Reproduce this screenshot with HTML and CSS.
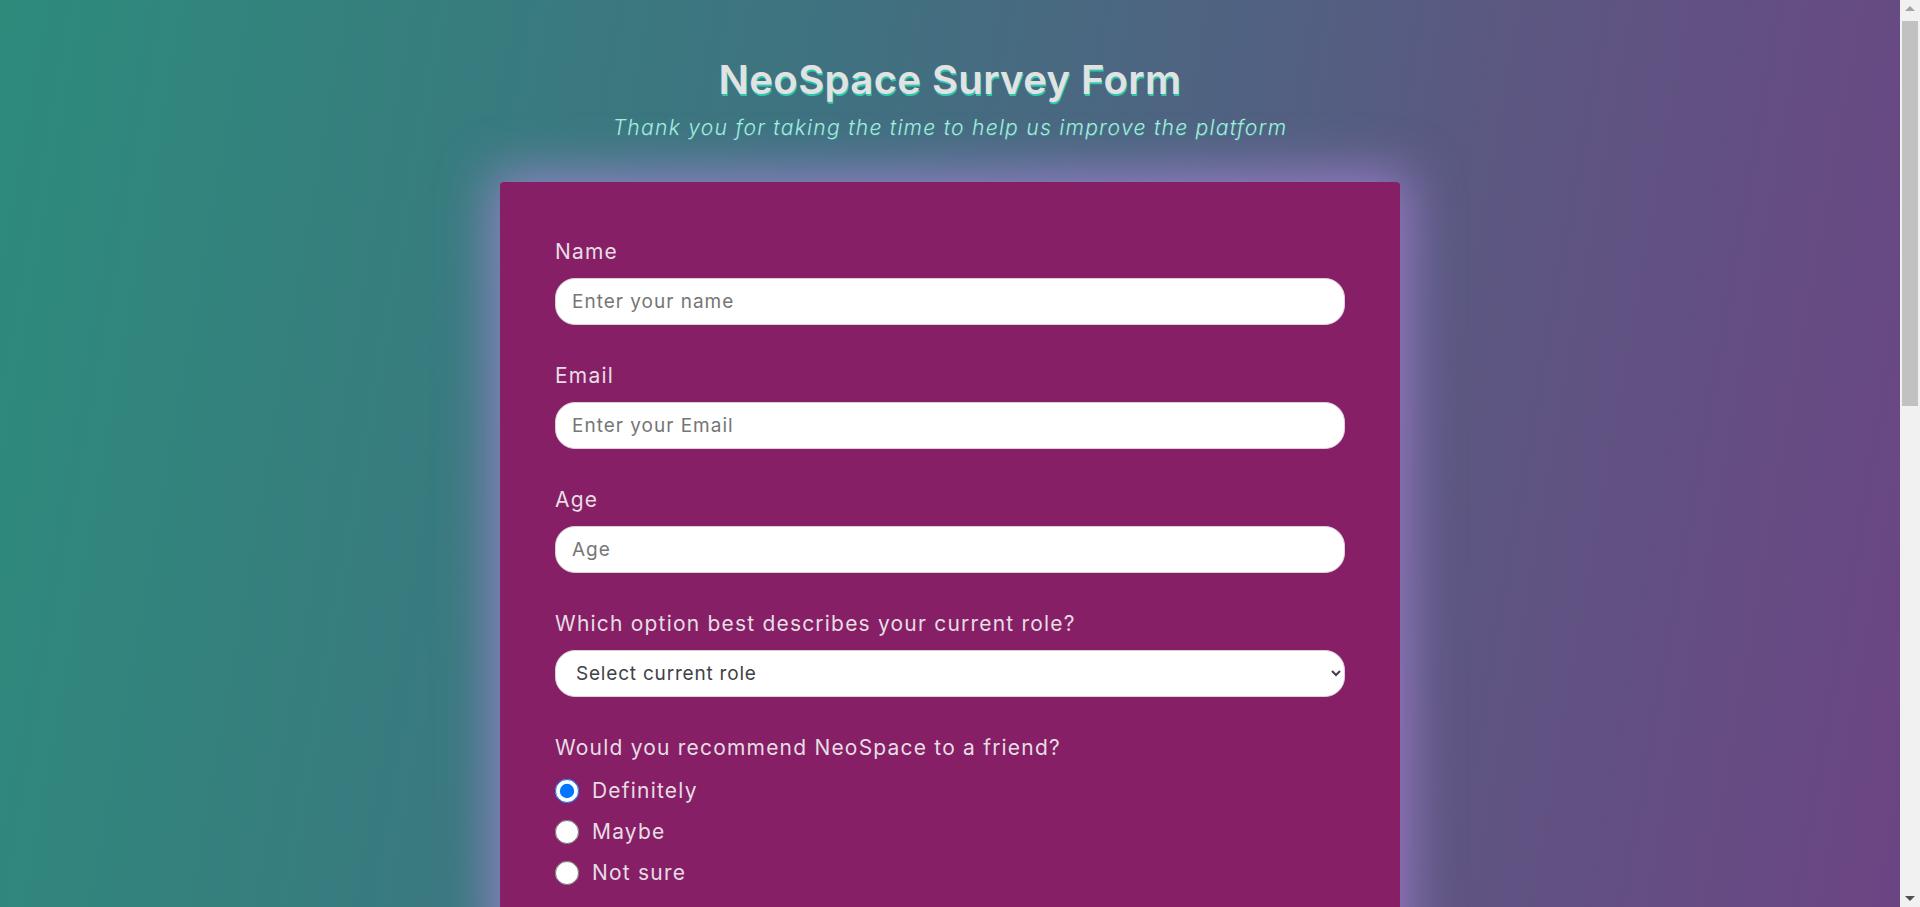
FILE: index.html
```html
<!DOCTYPE html>
<html lang="en">
<head>
<meta charset="utf-8">
<title>NeoSpace Survey Form</title>
<link rel="stylesheet" href="styles.css">
</head>
<body>
<header class="header">
  <h1 class="title">NeoSpace Survey Form</h1>
  <p class="subtitle">Thank you for taking the time to help us improve the platform</p>
</header>
<form class="card">
  <div class="group">
    <label class="label" for="name">Name</label>
    <input class="field" id="name" type="text" placeholder="Enter your name">
  </div>
  <div class="group">
    <label class="label" for="email">Email</label>
    <input class="field" id="email" type="email" placeholder="Enter your Email">
  </div>
  <div class="group">
    <label class="label" for="age">Age</label>
    <input class="field" id="age" type="number" placeholder="Age">
  </div>
  <div class="group">
    <label class="label" for="role">Which option best describes your current role?</label>
    <select class="field select" id="role">
      <option>Select current role</option>
      <option>Student</option>
      <option>Full Time Job</option>
      <option>Full Time Learner</option>
      <option>Prefer not to say</option>
      <option>Other</option>
    </select>
  </div>
  <div class="group">
    <p class="label">Would you recommend NeoSpace to a friend?</p>
    <label class="choice"><input class="radio" type="radio" name="rec" checked>Definitely</label>
    <label class="choice"><input class="radio" type="radio" name="rec">Maybe</label>
    <label class="choice"><input class="radio" type="radio" name="rec">Not sure</label>
  </div>
  <div class="group">
    <label class="label" for="feature">What is your favorite feature of NeoSpace?</label>
    <select class="field select" id="feature">
      <option>Select an option</option>
      <option>Challenges</option>
      <option>Projects</option>
      <option>Community</option>
      <option>Open Source</option>
    </select>
  </div>
  <div class="group">
    <p class="label">What would you like to see improved? (Check all that apply)</p>
    <label class="choice"><input class="check" type="checkbox">Front-end Projects</label>
    <label class="choice"><input class="check" type="checkbox">Back-end Projects</label>
    <label class="choice"><input class="check" type="checkbox">Data Visualization</label>
    <label class="choice"><input class="check" type="checkbox">Challenges</label>
    <label class="choice"><input class="check" type="checkbox">Open Source Community</label>
    <label class="choice"><input class="check" type="checkbox">Gitter help rooms</label>
    <label class="choice"><input class="check" type="checkbox">Videos</label>
    <label class="choice"><input class="check" type="checkbox">City Meetups</label>
    <label class="choice"><input class="check" type="checkbox">Wiki</label>
    <label class="choice"><input class="check" type="checkbox">Forum</label>
    <label class="choice"><input class="check" type="checkbox">Additional Courses</label>
  </div>
  <div class="group">
    <label class="label" for="comments">Any comments or suggestions?</label>
    <textarea class="field area" id="comments" placeholder="Enter your comment here..."></textarea>
  </div>
  <div class="group">
    <button class="submit" type="submit">Submit</button>
  </div>
</form>
<div class="scrollbar" aria-hidden="true">
  <span class="arrow arrow-up"></span>
  <span class="thumb"></span>
  <span class="arrow arrow-down"></span>
</div>
</body>
</html>
```
FILE: styles.css
```css
html {
  background: #3d6f80;
}
body {
  margin: 0;
  padding-right: 20px;
  min-height: 100vh;
  font-family: Inter, "Open Sans", "DejaVu Sans", sans-serif;
  background: linear-gradient(100deg, #2d8b7c 0%, #3f7280 40%, #5d5682 75%, #6c4483 100%);
  background-attachment: fixed;
  padding-bottom: 60px;
  display: flex;
  flex-direction: column;
  align-items: center;
}
.header {
  display: flex;
  flex-direction: column;
  align-items: center;
}
.title {
  margin: 56px 0 0;
  font-size: 40px;
  line-height: 48px;
  font-weight: 600;
  color: #e2e2e2;
  letter-spacing: 0.4px;
  text-shadow: 1px 2px 0 #2cc9b0;
}
.subtitle {
  margin: 12px 0 0;
  font-size: 21px;
  line-height: 24px;
  font-weight: 300;
  font-style: italic;
  color: #aeeae1;
  letter-spacing: 1.3px;
  text-shadow: 1px 1px 0 #2a8a80;
}
.card {
  margin-top: 42px;
  width: 900px;
  box-sizing: border-box;
  padding: 55px 55px 40px;
  background: #861f66;
  border-radius: 4px;
  box-shadow: 0 0 50px 10px rgba(168, 132, 214, 0.75);
}
.group {
  margin-bottom: 36px;
}
.label {
  display: block;
  margin: 0 0 11px;
  font-size: 21px;
  line-height: 30px;
  color: #e6dde4;
  letter-spacing: 1.2px;
}
.field {
  display: block;
  width: 100%;
  height: 47px;
  box-sizing: border-box;
  border: 1px solid #d8d0da;
  border-radius: 20px;
  background: #fff;
  padding: 0 16px;
  font-family: inherit;
  font-size: 19px;
  letter-spacing: 1px;
  color: #333;
}
.field::placeholder {
  color: #767676;
}
.select {
  padding-left: 16px;
  padding-right: 10px;
  color: #3f4147;
  font-size: 19px;
  letter-spacing: 0.8px;
}
.area {
  height: 160px;
  padding: 12px 16px;
  resize: vertical;
}
.choice {
  display: flex;
  align-items: center;
  height: 41px;
  font-size: 21px;
  color: #e6dde4;
  letter-spacing: 1.2px;
}
.group .label + .choice {
  margin-top: -4px;
}
.radio,
.check {
  width: 24px;
  height: 24px;
  margin: 0 13px 0 0;
}
.submit {
  display: block;
  width: 100%;
  height: 50px;
  border: none;
  border-radius: 20px;
  background: #2fb39e;
  color: #fff;
  font-family: inherit;
  font-size: 20px;
  font-weight: 600;
}
.scrollbar {
  position: fixed;
  top: 0;
  right: 0;
  width: 20px;
  height: 100vh;
  background: #f1f1f1;
  display: flex;
  flex-direction: column;
  align-items: center;
}
.arrow {
  width: 0;
  height: 0;
  border-left: 5px solid transparent;
  border-right: 5px solid transparent;
  margin: 6px 0;
}
.arrow-up {
  border-bottom: 5px solid #a3a3a3;
}
.arrow-down {
  margin-top: auto;
  border-top: 5px solid #505050;
}
.thumb {
  width: 16px;
  height: 385px;
  margin-top: 4px;
  background: #c1c1c1;
}
```
